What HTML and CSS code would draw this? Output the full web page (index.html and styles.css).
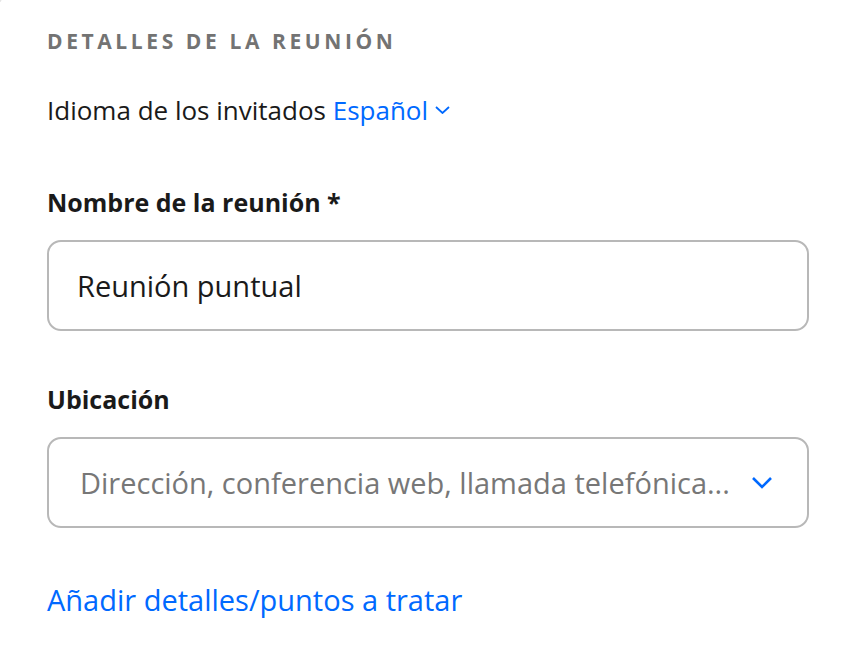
FILE: index.html
```html
<!DOCTYPE html>
<html lang="es">
<head>
<meta charset="utf-8">
<title>Detalles de la reunión</title>
<link rel="stylesheet" href="styles.css">
</head>
<body>
<div class="card">
  <h2 class="section-title">DETALLES DE LA REUNIÓN</h2>
  <p class="lang-row">Idioma de los invitados <a class="link lang-link" href="#">Español<svg class="chev-small" width="15" height="8" viewBox="0 0 15 8"><path d="M1 1 L7.5 7 L14 1" fill="none" stroke="#0069ff" stroke-width="1.8"/></svg></a></p>

  <div class="field">
    <label class="field-label">Nombre de la reunión *</label>
    <div class="input">Reunión puntual</div>
  </div>

  <div class="field">
    <label class="field-label">Ubicación</label>
    <div class="input select">
      <span class="placeholder">Dirección, conferencia web, llamada telefónica...</span>
      <svg class="chev" width="22" height="13" viewBox="0 0 22 13"><path d="M2 2 L11 11 L20 2" fill="none" stroke="#0069ff" stroke-width="2.6"/></svg>
    </div>
  </div>

  <a class="link add-link" href="#">Añadir detalles/puntos a tratar</a>
</div>
</body>
</html>
```

FILE: styles.css
```css
html, body {
  margin: 0;
  padding: 0;
  background: #ffffff;
  overflow: hidden;
}
body {
  font-family: "Open Sans", "Noto Sans", "Liberation Sans", sans-serif;
  color: #1a1a1a;
}
.card {
  margin: -5px -4px 0 -2px;
  border: 1px solid #dcdcdc;
  border-radius: 12px;
  padding: 30px 46px 40px 48px;
  height: 682px;
  box-sizing: border-box;
}
.section-title {
  margin: 0;
  font-size: 21px;
  font-weight: 700;
  letter-spacing: 3.6px;
  color: #737373;
  line-height: 30px;
}
.lang-row {
  margin: 38px 0 0;
  font-size: 26px;
  line-height: 32px;
}
.link {
  color: #0069ff;
  text-decoration: none;
}
.chev-small {
  margin-left: 7px;
  vertical-align: 6px;
}
.field {
  margin-top: 60px;
}
.field + .field {
  margin-top: 52px;
}
.field-label {
  display: block;
  font-size: 25px;
  font-weight: 700;
  line-height: 32px;
}
.input {
  margin-top: 22px;
  height: 91px;
  box-sizing: border-box;
  border: 2px solid #b8b8b8;
  border-radius: 14px;
  padding: 0 28px;
  display: flex;
  align-items: center;
  font-size: 29px;
}
.select {
  padding: 0 34px 0 31px;
  gap: 12px;
}
.placeholder {
  flex: 1;
  min-width: 0;
  white-space: nowrap;
  overflow: hidden;
  color: #777777;
}
.chev {
  flex: none;
}
.add-link {
  display: block;
  margin-top: 55px;
  font-size: 29px;
  line-height: 34px;
}
```
